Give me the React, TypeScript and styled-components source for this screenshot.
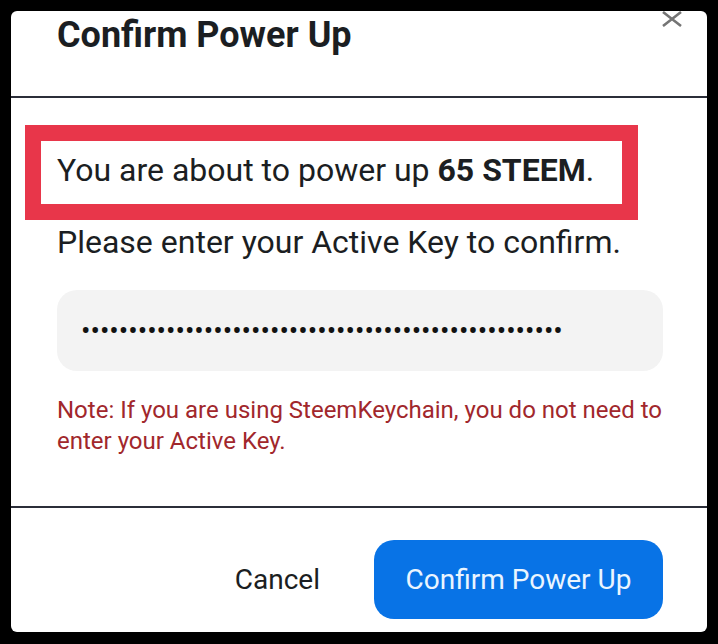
import styled, { createGlobalStyle } from "styled-components";

const GlobalStyle = createGlobalStyle`
  html, body {
    margin: 0;
    padding: 0;
    background: #000;
  }
  body {
    font-family: Roboto, "Liberation Sans", sans-serif;
  }
`;

const Page = styled.div`
  padding: 11px 11px 12px 11px;
`;

const Modal = styled.div`
  position: relative;
  width: 696px;
  height: 621px;
  background: #fff;
  border-radius: 6px;
  overflow: hidden;
  display: flex;
  flex-direction: column;
`;

const Header = styled.div`
  height: 87px;
  padding: 2px 44px 0 46px;
  box-sizing: border-box;
  border-bottom: 2px solid #2b2e39;
`;

const Title = styled.h2`
  margin: 0;
  font-size: 36px;
  line-height: 44px;
  font-weight: 700;
  color: #1b1e22;
`;

const CloseButton = styled.button`
  position: absolute;
  top: 0;
  right: 25px;
  width: 20px;
  height: 16px;
  padding: 0;
  border: 0;
  background: none;
  cursor: pointer;
  display: flex;
`;

const Body = styled.div`
  padding: 53px 44px 49px 46px;
  display: flex;
  flex-direction: column;
`;

const Text = styled.p<{ $gap?: number }>`
  margin: ${(p) => p.$gap ?? 0}px 0 0 0;
  font-size: 32px;
  line-height: 38px;
  color: #1b1e22;
`;

const KeyInput = styled.input`
  margin-top: 29px;
  height: 81px;
  width: 100%;
  box-sizing: border-box;
  border: 0;
  border-radius: 20px;
  background: #f3f3f3;
  padding: 0 24px;
  font-family: Roboto, "Liberation Sans", sans-serif;
  font-size: 28px;
  color: #111;
  outline: none;
`;

const Note = styled.p`
  margin: 24px 0 0 0;
  font-size: 24px;
  line-height: 31px;
  color: #a1272c;
`;

const Footer = styled.div`
  flex: 1;
  border-top: 2px solid #2b2e39;
  padding: 32px 44px 0 0;
  display: flex;
  justify-content: flex-end;
  align-items: flex-start;
  gap: 24px;
`;

const FooterButton = styled.button<{ $primary?: boolean }>`
  height: 79px;
  padding: 0 30px;
  border: 0;
  border-radius: 20px;
  font-family: Roboto, "Liberation Sans", sans-serif;
  font-size: 28px;
  cursor: pointer;
  background: ${(p) => (p.$primary ? "#0873e6" : "transparent")};
  color: ${(p) => (p.$primary ? "#eaf5ff" : "#1b1e22")};
  min-width: ${(p) => (p.$primary ? 289 : 0)}px;
`;

const Highlight = styled.div`
  position: absolute;
  left: 14px;
  top: 114px;
  width: 613px;
  height: 95px;
  box-sizing: border-box;
  border: 16px solid #e8364a;
  pointer-events: none;
`;

export default function App() {
  return (
    <>
      <GlobalStyle />
      <Page>
        <Modal>
          <Header>
            <Title>Confirm Power Up</Title>
          </Header>
          <CloseButton aria-label="Close">
            <svg width="20" height="16" viewBox="0 0 20 16">
              <path
                d="M1 1 L19 15 M19 1 L1 15"
                stroke="#757575"
                strokeWidth="2.6"
                fill="none"
              />
            </svg>
          </CloseButton>
          <Body>
            <Text>
              You are about to power up <b>65 STEEM</b>.
            </Text>
            <Text $gap={34}>Please enter your Active Key to confirm.</Text>
            <KeyInput type="password" defaultValue={"x".repeat(51)} />
            <Note>
              Note: If you are using SteemKeychain, you do not need to enter
              your Active Key.
            </Note>
          </Body>
          <Footer>
            <FooterButton>Cancel</FooterButton>
            <FooterButton $primary>Confirm Power Up</FooterButton>
          </Footer>
          <Highlight />
        </Modal>
      </Page>
    </>
  );
}
